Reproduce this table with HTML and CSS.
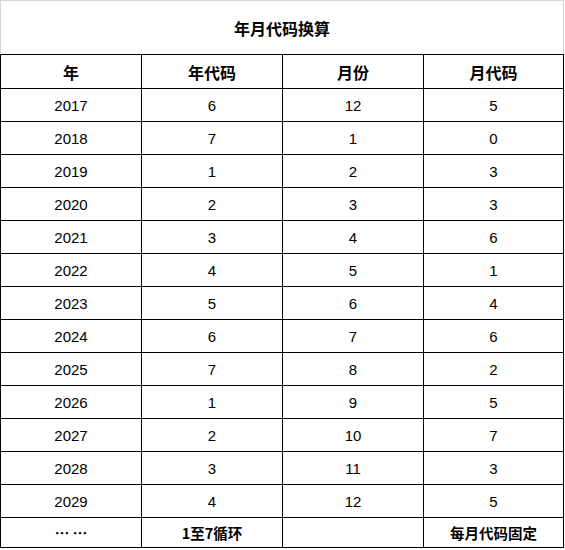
FILE: index.html
```html
<!DOCTYPE html>
<html lang="zh-CN">
<head>
<meta charset="utf-8">
<title>年月代码换算</title>
<link rel="stylesheet" href="styles.css">
</head>
<body>
<div class="sheet">
  <div class="title">年月代码换算</div>
  <div class="grid">
    <div class="cell head">年</div><div class="cell head">年代码</div><div class="cell head">月份</div><div class="cell head">月代码</div>
    <div class="cell">2017</div><div class="cell">6</div><div class="cell">12</div><div class="cell">5</div>
    <div class="cell">2018</div><div class="cell">7</div><div class="cell">1</div><div class="cell">0</div>
    <div class="cell">2019</div><div class="cell">1</div><div class="cell">2</div><div class="cell">3</div>
    <div class="cell">2020</div><div class="cell">2</div><div class="cell">3</div><div class="cell">3</div>
    <div class="cell">2021</div><div class="cell">3</div><div class="cell">4</div><div class="cell">6</div>
    <div class="cell">2022</div><div class="cell">4</div><div class="cell">5</div><div class="cell">1</div>
    <div class="cell">2023</div><div class="cell">5</div><div class="cell">6</div><div class="cell">4</div>
    <div class="cell">2024</div><div class="cell">6</div><div class="cell">7</div><div class="cell">6</div>
    <div class="cell">2025</div><div class="cell">7</div><div class="cell">8</div><div class="cell">2</div>
    <div class="cell">2026</div><div class="cell">1</div><div class="cell">9</div><div class="cell">5</div>
    <div class="cell">2027</div><div class="cell">2</div><div class="cell">10</div><div class="cell">7</div>
    <div class="cell">2028</div><div class="cell">3</div><div class="cell">11</div><div class="cell">3</div>
    <div class="cell">2029</div><div class="cell">4</div><div class="cell">12</div><div class="cell">5</div>
    <div class="cell foot">… …</div><div class="cell foot">1至7循环</div><div class="cell foot"></div><div class="cell foot">每月代码固定</div>
  </div>
</div>
</body>
</html>
```
FILE: styles.css
```css
html, body {
  margin: 0;
  padding: 0;
  background: #ffffff;
}
.sheet {
  width: 564px;
  font-family: "Liberation Sans", "Noto Sans CJK SC", sans-serif;
  color: #000;
}
.title {
  height: 53px;
  border-top: 1px solid #d6d6d6;
  border-left: 1px solid #d6d6d6;
  border-right: 1px solid #d6d6d6;
  box-sizing: content-box;
  width: 562px;
  display: flex;
  align-items: center;
  justify-content: center;
  font-family: "Noto Sans CJK SC", sans-serif;
  font-weight: bold;
  font-size: 16px;
}
.grid {
  display: grid;
  grid-template-columns: 140px 140px 140px 139px;
  grid-template-rows: 33px repeat(13, 32px) 29px;
  gap: 1px;
  padding: 1px;
  background: #000;
  width: 562px;
}
.cell {
  background: #fff;
  display: flex;
  align-items: center;
  justify-content: center;
  font-size: 15px;
  padding-top: 1px;
}
.head {
  font-family: "Noto Sans CJK SC", sans-serif;
  font-weight: bold;
  font-size: 16px;
  padding-top: 0;
}
.foot {
  font-family: "Noto Sans CJK SC", sans-serif;
  font-weight: bold;
  font-size: 14.5px;
  padding-top: 0;
}
```
